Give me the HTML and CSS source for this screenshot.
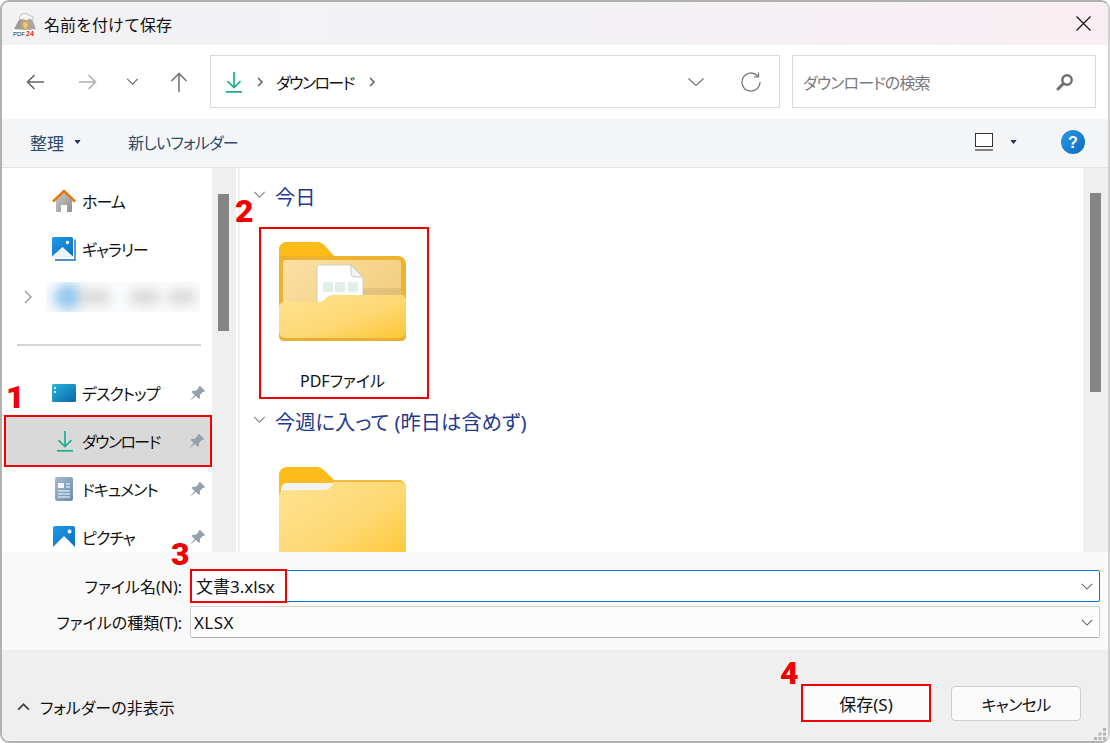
FILE: index.html
```html
<!DOCTYPE html>
<html lang="ja">
<head>
<meta charset="utf-8">
<title>名前を付けて保存</title>
<link rel="stylesheet" href="styles.css">
</head>
<body>
<svg class="defs" width="0" height="0" aria-hidden="true">
  <defs>
    <linearGradient id="frontGrad" x1="0" y1="0" x2="1" y2="1"><stop offset="0" stop-color="#fee394"/><stop offset="0.55" stop-color="#fed872"/><stop offset="1" stop-color="#fcc630"/></linearGradient>
    <linearGradient id="panelGrad" x1="0" y1="0" x2="1" y2="0.4"><stop offset="0" stop-color="#fae0a4"/><stop offset="1" stop-color="#f3d083"/></linearGradient>
    <linearGradient id="blueGrad" x1="0" y1="0" x2="1" y2="1"><stop offset="0" stop-color="#1e9be6"/><stop offset="1" stop-color="#0c6cc0"/></linearGradient>
    <linearGradient id="deskGrad" x1="0" y1="0" x2="1" y2="1"><stop offset="0" stop-color="#28b6e0"/><stop offset="1" stop-color="#0d64a8"/></linearGradient>
    <linearGradient id="homeGrad" x1="0" y1="0" x2="1" y2="1"><stop offset="0" stop-color="#c9c9c9"/><stop offset="1" stop-color="#8f8f8f"/></linearGradient>
    <linearGradient id="docGrad" x1="0" y1="0" x2="1" y2="1"><stop offset="0" stop-color="#a5bad2"/><stop offset="1" stop-color="#6d8cb0"/></linearGradient>
    <linearGradient id="helpGrad" x1="0" y1="0" x2="1" y2="1"><stop offset="0" stop-color="#2a9ce6"/><stop offset="1" stop-color="#0a68c0"/></linearGradient>
    <symbol id="i-download" viewBox="0 0 16 22"><path d="M8 1v15M1.5 10.2 8 16.6l6.5-6.4" fill="none" stroke="#1cae8e" stroke-width="1.7"/><path d="M0 20.8h16" stroke="#1cae8e" stroke-width="1.7"/></symbol>
    <symbol id="i-pin" viewBox="0 0 16 16"><path d="M10 .8 15.2 6l-1.2 1-1-.2-3 3 .1 3-1.2 1.2-3-3L1 15l-.3-.3 3.900-4.800-3-3L2.800 5.700l3 .1 3-3-.2-1z" fill="#97a1ab"/></symbol>
    <symbol id="i-pic" viewBox="0 0 22 22"><rect width="22" height="22" rx="2" fill="url(#blueGrad)"/><circle cx="16.500" cy="5.500" r="2" fill="#fff"/><path d="M0 21 11 10l11 11v1H0z" fill="#fff"/></symbol>
    <symbol id="i-chev" viewBox="0 0 14 8"><path d="M1 1l6 6 6-6" fill="none" stroke="currentColor" stroke-width="1.300"/></symbol>
    <symbol id="i-caret" viewBox="0 0 8 5"><path d="M0 0h8L4 5z" fill="#1f3558"/></symbol>
  </defs>
</svg>
<div class="window">
  <header class="titlebar">
    <svg class="app-icon" viewBox="0 0 24 24" aria-hidden="true">
      <path d="M1 17 6 8l4-2 3 12z" fill="#9a9a9a"/>
      <path d="M14 6l5 1 4 10-8 1z" fill="#a8a8a8"/>
      <path d="M6 6c1-4 5-5 8-4l6 3c1 1 0 3-2 3l-2-1-2 2-3-2-3 1z" fill="#f6f6f6" stroke="#888" stroke-width=".5"/>
      <ellipse cx="12.500" cy="13" rx="5" ry="5" fill="#c9a36b"/>
      <path d="M10 11l3-1 2 3-2 4-2-1z" fill="#e3c897"/>
      <rect x="0" y="18" width="24" height="6" fill="#fff"/>
      <text x="0" y="24" class="app-pdf">PDF</text><text x="13" y="24" class="app-24">24</text>
    </svg>
    <span class="title-text">名前を付けて保存</span>
    <svg class="close" viewBox="0 0 15 15" aria-hidden="true"><path d="M.5.500l14 14M14.500.500l-14 14" stroke="#111" stroke-width="1.200"/></svg>
  </header>

  <nav class="addressbar">
    <div class="navs">
      <svg class="nav-arrow" viewBox="0 0 18 16"><path d="M18 8H1.500M8.500 1 1.500 8l7 7" fill="none" stroke="#666" stroke-width="1.600"/></svg>
      <svg class="nav-arrow forward" viewBox="0 0 18 16"><path d="M0 8h16.500M9.500 1l7 7-7 7" fill="none" stroke="#b0b0b0" stroke-width="1.600"/></svg>
      <svg class="nav-chev" viewBox="0 0 14 8"><use href="#i-chev"/></svg>
      <svg class="nav-arrow up" viewBox="0 0 18 20"><path d="M9 20V1.500M1.500 9 9 1.500 16.500 9" fill="none" stroke="#777" stroke-width="1.600"/></svg>
    </div>
    <div class="pathbox">
      <svg class="path-dl" viewBox="0 0 16 22"><use href="#i-download"/></svg>
      <svg class="crumb" viewBox="0 0 6 10"><path d="M1 1l4 4-4 4" fill="none" stroke="#666" stroke-width="1.600"/></svg>
      <span class="path-text">ダウンロード</span>
      <svg class="crumb" viewBox="0 0 6 10"><path d="M1 1l4 4-4 4" fill="none" stroke="#666" stroke-width="1.600"/></svg>
      <span class="spacer"></span>
      <svg class="path-chev" viewBox="0 0 16 8"><path d="M.500.500 8 7.500 15.500.500" fill="none" stroke="#777" stroke-width="1.200"/></svg>
      <svg class="refresh" viewBox="0 0 20 20"><path d="M16.500 3.800A9 9 0 1 0 19 10" fill="none" stroke="#777" stroke-width="1.300"/><path d="M17.500.500v4.300h-4.300" fill="none" stroke="#777" stroke-width="1.300"/></svg>
    </div>
    <div class="searchbox">
      <span class="search-text">ダウンロードの検索</span>
      <svg class="search-icon" viewBox="0 0 18 18"><circle cx="11" cy="7" r="4.700" fill="none" stroke="#6e6e6e" stroke-width="2.400"/><path d="M7.500 10.500 2 16" stroke="#6e6e6e" stroke-width="3" stroke-linecap="round"/></svg>
    </div>
  </nav>

  <div class="toolbar">
    <span class="tool-item">整理</span>
    <svg class="caret" viewBox="0 0 8 5"><use href="#i-caret"/></svg>
    <span class="tool-item new-folder">新しいフォルダー</span>
    <span class="spacer"></span>
    <svg class="view-icon" viewBox="0 0 18 18"><rect x=".5" y=".5" width="17" height="13" fill="#fff" stroke="#333"/><path d="M0 17h18" stroke="#111" stroke-width="1.200"/></svg>
    <svg class="caret view-caret" viewBox="0 0 8 5"><use href="#i-caret"/></svg>
    <svg class="help" viewBox="0 0 24 24"><circle cx="12" cy="12" r="12" fill="url(#helpGrad)"/><text x="12" y="17.500" class="help-q">?</text></svg>
  </div>

  <main class="main">
    <aside class="sidebar">
      <div class="side-row">
        <svg class="side-icon" viewBox="0 0 24 24"><path d="M4 11 12 3l8 8v11a1 1 0 0 1-1 1h-4v-7H9v7H5a1 1 0 0 1-1-1z" fill="url(#homeGrad)"/><path d="M1 12.500 12 2l11 10.500" fill="none" stroke="#e47a0c" stroke-width="2.600"/></svg>
        <span class="side-label">ホーム</span>
      </div>
      <div class="side-row">
        <svg class="side-icon" viewBox="0 0 24 24"><path d="M23 2.500V23H3" fill="none" stroke="#4f8fd0" stroke-width="1.800"/><rect width="21" height="21" rx="1.500" fill="url(#blueGrad)"/><circle cx="15.500" cy="5.500" r="1.800" fill="#fff"/><path d="M0 19.500 10.500 10 21 19.500V21H0z" fill="#eef6fc"/></svg>
        <span class="side-label">ギャラリー</span>
      </div>
      <div class="side-row">
        <svg class="expander" viewBox="0 0 8 14"><path d="M1 1l6 6-6 6" fill="none" stroke="#999" stroke-width="1.400"/></svg>
        <div class="blurred" aria-hidden="true">
          <span class="blob blob-blue"></span><span class="blob blob-a"></span><span class="blob blob-b"></span><span class="blob blob-c"></span>
        </div>
      </div>
      <div class="side-sep"><hr class="sep-line"></div>
      <div class="side-row">
        <svg class="side-icon" viewBox="0 0 24 18"><rect width="24" height="18" rx="1.500" fill="url(#deskGrad)"/><path d="M2 3h2v2H2zM2 7h2v2H2z" fill="#d6f2fb"/></svg>
        <span class="side-label">デスクトップ</span>
        <svg class="pin" viewBox="0 0 16 16"><use href="#i-pin"/></svg>
      </div>
      <div class="side-row selected">
        <svg class="side-icon dl" viewBox="0 0 16 22"><use href="#i-download"/></svg>
        <span class="side-label tight">ダウンロード</span>
        <svg class="pin" viewBox="0 0 16 16"><use href="#i-pin"/></svg>
      </div>
      <div class="side-row">
        <svg class="side-icon doc" viewBox="0 0 18 24"><rect width="18" height="24" rx="2" fill="url(#docGrad)"/><path d="M3 6h6v5H3z" fill="#fff" opacity=".9"/><path d="M11 7h4M11 10h4M3 14h12M3 17h12M3 20h12" stroke="#fff" stroke-width="1.100"/></svg>
        <span class="side-label">ドキュメント</span>
        <svg class="pin" viewBox="0 0 16 16"><use href="#i-pin"/></svg>
      </div>
      <div class="side-row">
        <svg class="side-icon pic" viewBox="0 0 22 22"><use href="#i-pic"/></svg>
        <span class="side-label">ピクチャ</span>
        <svg class="pin" viewBox="0 0 16 16"><use href="#i-pin"/></svg>
      </div>
    </aside>
    <div class="scrolltrack side-track"><div class="thumb side-thumb"></div></div>
    <div class="divider"></div>
    <section class="content">
      <div class="group-head first">
        <svg class="group-chev" viewBox="0 0 14 8"><use href="#i-chev"/></svg>
        <span class="group-title">今日</span>
      </div>
      <div class="card">
        <svg class="folder" viewBox="0 0 127 100">
          <path d="M0 8a8 8 0 0 1 8-8h30a10 10 0 0 1 7 3l10 11h64a8 8 0 0 1 8 8v74H0z" fill="#efb22c"/>
          <path d="M0 8a8 8 0 0 1 8-8h30a10 10 0 0 1 7 3l10 11H0z" fill="#fdbb1c"/>
          <rect x="4" y="18" width="118" height="50" rx="3" fill="url(#panelGrad)"/>
          <path d="M38 26a3 3 0 0 1 3-3h31l12 12v33H38z" fill="#fff" stroke="#c8c8c8" stroke-width=".8"/>
          <path d="M72 23v8a4 4 0 0 0 4 4h8z" fill="#f2f2f2" stroke="#bdbdbd" stroke-width=".8"/>
          <path d="M44 40h10v10H44zM56 40h10v10H56zM69 40h10v10H69z" fill="#e2efe8"/>
          <path d="M84 46h38v7H84z" fill="#000" opacity=".07"/>
          <path d="M0 95V65a5 5 0 0 1 5-5h34a9 9 0 0 0 6-2l3-3a9 9 0 0 1 6-2h68a5 5 0 0 1 5 5v37a5 5 0 0 1-5 4H5a5 5 0 0 1-5-4z" fill="url(#frontGrad)"/>
          <path d="M0 90a6 6 0 0 0 6 6h115a6 6 0 0 0 6-6v4a5 5 0 0 1-5 5H5a5 5 0 0 1-5-5z" fill="#e9ae34"/>
        </svg>
        <span class="card-label">PDFファイル</span>
      </div>
      <div class="group-head second">
        <svg class="group-chev" viewBox="0 0 14 8"><use href="#i-chev"/></svg>
        <span class="group-title">今週に入って (昨日は含めず)</span>
      </div>
      <svg class="folder folder-second" viewBox="0 0 127 100">
        <path d="M0 8a8 8 0 0 1 8-8h30a10 10 0 0 1 7 3l10 10h64a8 8 0 0 1 8 8v79H0z" fill="#fdbb1c"/>
        <path d="M55 13h64a8 8 0 0 1 8 8v4H50z" fill="#f2bb3c"/>
        <path d="M2 22a6 6 0 0 1 6-6h47l-6 8H2z" fill="#f3f3f3"/>
        <path d="M0 100V29a6 6 0 0 1 6-6h40a8 8 0 0 0 6-3l3-5h66a6 6 0 0 1 6 6v79z" fill="url(#frontGrad)"/>
      </svg>
    </section>
    <div class="scrolltrack main-track"><div class="thumb main-thumb"></div></div>
  </main>

  <div class="form">
    <div class="form-row">
      <span class="form-label">ファイル名(N):</span>
      <div class="field focused">
        <span class="filename">文書3.xlsx</span>
        <svg class="field-chev" viewBox="0 0 14 8"><use href="#i-chev"/></svg>
      </div>
    </div>
    <div class="form-row">
      <span class="form-label">ファイルの種類(T):</span>
      <div class="field">
        <span class="filetype">XLSX</span>
        <svg class="field-chev" viewBox="0 0 14 8"><use href="#i-chev"/></svg>
      </div>
    </div>
  </div>

  <footer class="footer">
    <div class="toggle">
      <svg class="toggle-chev" viewBox="0 0 14 9"><path d="M1 7.500l6-6 6 6" fill="none" stroke="#444" stroke-width="2"/></svg>
      <span>フォルダーの非表示</span>
    </div>
    <span class="spacer"></span>
    <div class="btn btn-save">保存(S)</div>
    <div class="btn btn-cancel">キャンセル</div>
    <svg class="grip" viewBox="0 0 12 12"><path d="M9 0h3v3H9zM4.500 4.500h3v3h-3zM9 4.500h3v3H9zM0 9h3v3H0zM4.500 9h3v3h-3zM9 9h3v3H9z" fill="#b5b5b5"/></svg>
  </footer>

  <span class="step step-1">1</span>
  <span class="step step-2">2</span>
  <span class="step step-3">3</span>
  <span class="step step-4">4</span>
</div>
</body>
</html>
```

FILE: styles.css
```css
* { box-sizing: border-box; }
html, body { margin: 0; padding: 0; background: #fff; }
body {
  width: 1110px;
  height: 743px;
  overflow: hidden;
  font-family: "Noto Sans", "Noto Sans CJK JP", sans-serif;
  font-feature-settings: "palt";
  font-size: 15px;
  color: #111;
}
.defs { position: absolute; }
svg { display: block; flex: none; }
.spacer { flex: 1; }

.window {
  position: relative;
  width: 1110px;
  height: 743px;
  display: flex;
  flex-direction: column;
  border: 2px solid #b2b2b2;
  border-right-color: #d0d0d0;
  border-radius: 9px;
  overflow: hidden;
  background: #fff;
}

/* title bar */
.titlebar {
  height: 43px;
  flex: none;
  display: flex;
  align-items: center;
  padding: 0 17px 0 11px;
  background: linear-gradient(90deg, #f2f2f4 0%, #f3f1f4 55%, #f8edf2 100%);
}
.app-icon { width: 24px; height: 24px; margin-top: 1px; }
.app-pdf { font: 6px "Liberation Sans", sans-serif; fill: #222; }
.app-24 { font: bold 7px "Liberation Sans", sans-serif; fill: #f01010; }
.title-text { margin-left: 7px; font-size: 16px; flex: 1; font-feature-settings: normal; }
.close { width: 15px; height: 15px; }

/* address bar */
.addressbar {
  height: 74px;
  flex: none;
  display: flex;
  padding: 10px 12px 11px 0;
  background: #fff;
}
.navs { width: 208px; flex: none; display: flex; align-items: center; padding: 0 0 0 24px; color: #666; }
.nav-arrow { width: 18px; height: 16px; }
.forward { margin-left: 35px; }
.nav-chev { width: 13px; height: 7px; margin-left: 29px; }
.up { height: 20px; margin-left: 31px; }
.pathbox, .searchbox {
  border: 1px solid #d9d9d9;
  display: flex;
  align-items: center;
  background: #fff;
}
.pathbox { width: 570px; flex: none; padding: 0 18px 0 15px; }
.path-dl { width: 16px; height: 22px; }
.crumb { width: 6px; height: 10px; margin: 1px 13px 0 15px; }
.path-text { font-size: 16px; letter-spacing: -1.6px; }
.path-chev { width: 16px; height: 8px; margin-right: 37px; }
.refresh { width: 20px; height: 20px; }
.searchbox { flex: 1; margin-left: 12px; padding: 0 21px 0 10px; justify-content: space-between; }
.search-text { color: #7a7a7a; font-size: 16px; letter-spacing: -.9px; }
.search-icon { width: 18px; height: 18px; }

/* toolbar */
.toolbar {
  height: 49px;
  flex: none;
  display: flex;
  align-items: center;
  padding: 0 23px 2px 28px;
  background: #f4f5f7;
  border-bottom: 1px solid #e3e3e3;
  color: #2f4a6b;
}
.tool-item { font-size: 17px; }
.caret { width: 7px; height: 4px; margin-left: 10px; }
.new-folder { margin-left: 47px; font-size: 16px; letter-spacing: -.75px; }
.view-icon { width: 18px; height: 18px; }
.view-caret { margin: 0 44px 0 17px; }
.help { width: 24px; height: 24px; }
.help-q { font: bold 16px "Liberation Sans", sans-serif; fill: #fff; text-anchor: middle; }

/* main panes */
.main { flex: 1; min-height: 0; display: flex; overflow: hidden; background: #fff; }
.sidebar { width: 210px; flex: none; padding-top: 9px; overflow: hidden; background: #fff; }
.side-row { height: 48px; display: flex; align-items: center; position: relative; padding-left: 50px; }
.side-icon { width: 24px; height: 24px; }
.side-label { margin-left: 6px; font-size: 16px; flex: 1; letter-spacing: -1px; }
.tight { letter-spacing: -1.6px; }
.pin { width: 16px; height: 16px; margin-right: 6px; }
.dl { width: 16px; height: 22px; margin: 0 4px 0 3px; }
.doc { width: 18px; margin: 0 3px 0 3px; }
.pic { width: 22px; height: 22px; margin: 0 1px; }
.selected {
  height: 52px;
  margin: -2px 0 -2px 2px;
  padding-left: 48px;
  padding-right: 2px;
  background: #d9d9d9;
  border: 2px solid #f00000;
  z-index: 1;
}
.selected .side-label { margin-left: 5px; }
.selected .pin { margin-right: 3px; }
.expander { width: 8px; height: 14px; position: absolute; left: 22px; top: 17px; }
.blurred {
  width: 154px;
  height: 30px;
  margin-left: -6px;
  display: flex;
  align-items: center;
  background: #fafbfc;
  padding-left: 8px;
  overflow: hidden;
}
.blob { display: block; flex: none; height: 14px; border-radius: 8px; background: #d6d6d6; filter: blur(6px); }
.blob-blue { width: 28px; height: 26px; background: #93c8f0; border-radius: 50%; }
.blob-a { width: 32px; margin-left: -4px; }
.blob-b { width: 30px; margin-left: 20px; }
.blob-c { width: 28px; margin-left: 8px; }
.side-sep { height: 48px; display: flex; align-items: center; padding: 0 11px 0 15px; }
.sep-line { width: 100%; height: 2px; margin: 0; border: 0; background: #d5d5d5; }

.scrolltrack { flex: none; background: #efefef; }
.side-track { width: 24px; padding: 26px 0 0 6px; }
.main-track { width: 25px; padding: 25px 0 0 7px; }
.thumb { width: 11px; background: #858585; }
.side-thumb { height: 137px; }
.main-thumb { height: 199px; }
.divider { width: 4px; flex: none; background: #fff; border-right: 2px solid #f0f0f0; }

.content { flex: 1; min-width: 0; overflow: hidden; padding-left: 13px; background: #fff; }
.group-head { display: flex; align-items: center; color: #1f3a8f; height: 30px; }
.first { margin-top: 14px; }
.second { margin-top: 8px; }
.group-chev { width: 13px; height: 7px; color: #888; margin-top: -6px; }
.group-title { margin: -2px 0 0 9px; font-size: 20.3px; white-space: nowrap; }
.card {
  width: 170px;
  height: 172px;
  margin: 15px 0 0 6px;
  border: 2px solid #f00000;
  padding: 13px 0 0 18px;
  display: flex;
  flex-direction: column;
}
.folder { width: 127px; height: 100px; }
.card-label { width: 127px; margin-top: 26px; text-align: center; font-size: 16px; white-space: nowrap; }
.folder-second { margin: 30px 0 0 26px; }

/* form */
.form {
  height: 98px;
  flex: none;
  padding: 18px 8px 0 0;
  background: #f9f9f9;
  display: flex;
  flex-direction: column;
  gap: 4px;
}
.form-row { display: flex; align-items: center; height: 32px; }
.form-label { width: 180px; flex: none; text-align: right; font-size: 16px; white-space: nowrap; }
.field {
  flex: 1;
  height: 32px;
  margin-left: 8px;
  display: flex;
  align-items: center;
  justify-content: space-between;
  padding: 0 6px 0 3px;
  background: #fcfcfc;
  border: 1px solid #cfcfcf;
  border-bottom-color: #a9a9a9;
  border-radius: 2px;
}
.focused { background: #fff; border: 1px solid #0078d4; padding-left: 0; }
.filename {
  width: 97px;
  height: 34px;
  margin: -1px 0 0 -1px;
  padding-left: 4px;
  display: flex;
  align-items: center;
  border: 2px solid #f00000;
  background: #fff;
  font-size: 17px;
  white-space: nowrap;
}
.filetype { font-size: 17px; letter-spacing: .4px; }
.field-chev { width: 12px; height: 7px; color: #666; }

/* footer */
.footer {
  height: 91px;
  flex: none;
  position: relative;
  display: flex;
  align-items: flex-start;
  padding: 34px 27px 0 15px;
  background: #efefef;
}
.toggle { display: flex; align-items: center; margin-top: 11px; font-size: 16px; }
.toggle-chev { width: 13px; height: 8px; margin-right: 10px; }
.btn { width: 130px; display: flex; align-items: center; justify-content: center; font-size: 16px; }
.btn-save { height: 38px; background: #fcfcfc; border: 2px solid #f00000; font-size: 17px; }
.btn-cancel { height: 35px; margin: 2px 0 0 20px; background: #fbfbfb; border: 1px solid #cdcdcd; border-radius: 4px; letter-spacing: -.7px; }
.grip { width: 12px; height: 12px; position: absolute; right: 2px; bottom: 1px; }

/* numbered annotations */
.step {
  position: absolute;
  font: 900 32px/32px Roboto, "Liberation Sans", sans-serif;
  color: #f00000;
  z-index: 5;
}
.step-1 { left: 4px; top: 379px; }
.step-2 { left: 233px; top: 193px; }
.step-3 { left: 169px; top: 536px; }
.step-4 { left: 778px; top: 655px; }
```
